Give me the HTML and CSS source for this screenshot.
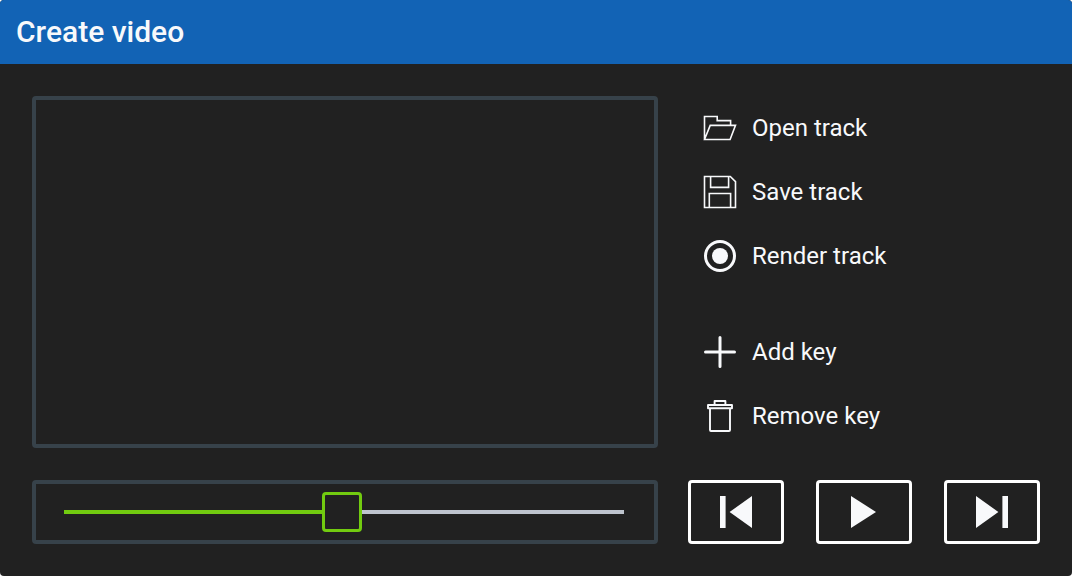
FILE: index.html
```html
<!DOCTYPE html>
<html lang="en">
<head>
<meta charset="utf-8">
<title>Create video</title>
<link rel="stylesheet" href="styles.css">
</head>
<body>
<main class="window">
  <header class="titlebar"><h1 class="title">Create video</h1></header>
  <div class="content">
    <section class="preview"></section>
    <nav class="menu">
      <button class="action"><svg class="icon" viewBox="0 0 32 32"><path stroke-width="1.6" d="M.5 27.5V4.5H13.2V8.6H26.6V13.4M.5 27.5 6.2 13.4H31.5L26.1 27.5Z"/></svg>Open track</button>
      <button class="action"><svg class="icon" viewBox="0 0 32 32"><path stroke-width="1.6" d="M.5.5H26.3L31.5 5.7V31.5H.5ZM6.6.5V11.4H24.6V.5M5.3 31.5V17.5H26.6V31.5"/></svg>Save track</button>
      <button class="action"><svg class="icon" viewBox="0 0 32 32"><circle cx="16" cy="16" r="14.5" stroke-width="3"/><circle class="solid" cx="16" cy="16" r="8"/></svg>Render track</button>
      <button class="action action-group"><svg class="icon" viewBox="0 0 32 32"><path stroke-width="3" stroke-linecap="round" d="M16 1.5V30.5M1.5 16H30.5"/></svg>Add key</button>
      <button class="action"><svg class="icon" viewBox="0 0 32 32"><path stroke-width="1.9" stroke-linejoin="round" d="M4 5H28V8.3H4ZM10.6 5V1H21.4V5M6 8.3V30Q6 31 7 31H25Q26 31 26 30V8.3"/></svg>Remove key</button>
    </nav>
    <section class="timeline">
      <div class="played"></div><div class="thumb"></div><div class="remaining"></div>
    </section>
    <div class="transport">
      <button class="control" aria-label="Previous"><svg class="icon" viewBox="0 0 32 32"><path class="solid" d="M0 0H5.6V32H0ZM32 0V32L9.6 16Z"/></svg></button>
      <button class="control" aria-label="Play"><svg class="icon" viewBox="0 0 32 32"><path class="solid" d="M3 0V32L28 16Z"/></svg></button>
      <button class="control" aria-label="Next"><svg class="icon" viewBox="0 0 32 32"><path class="solid" d="M0 0V32L22.4 16ZM26.4 0H32V32H26.4Z"/></svg></button>
    </div>
  </div>
</main>
</body>
</html>
```
FILE: styles.css
```css
* { box-sizing: border-box; }
body { margin: 0; background: #fff; font-family: Roboto, sans-serif; color: #f8f9fb; }
.window { width: 1072px; height: 576px; overflow: hidden; border-radius: 4px; background: #212121; }
.titlebar { display: flex; align-items: center; height: 64px; padding: 0 16px; background: #1263b5; }
.title { margin: 0; font-size: 30px; font-weight: 500; line-height: 36px; }
.content { display: grid; grid-template-columns: 626px 352px; grid-template-rows: 352px 64px; column-gap: 30px; row-gap: 32px; padding: 32px; }
.preview, .timeline { border: 4px solid #37424a; border-radius: 4px; }
.menu { display: flex; flex-direction: column; gap: 32px; padding: 16px; }
.action { display: flex; align-items: center; gap: 16px; height: 32px; padding: 0; border: 0; background: none; color: inherit; font: 400 24px/32px Roboto, sans-serif; white-space: nowrap; }
.action-group { margin-top: 32px; }
.icon { display: block; flex: none; width: 32px; height: 32px; overflow: visible; fill: none; stroke: #f8f9fb; }
.solid { fill: #f8f9fb; stroke: none; }
.timeline { display: flex; align-items: center; padding: 0 30px 0 28px; }
.played { width: 258px; height: 4px; background: #72cb10; }
.thumb { width: 40px; height: 40px; border: 3px solid #72cb10; border-radius: 4px; }
.remaining { flex: 1; height: 4px; background: #bec4ce; }
.transport { display: flex; gap: 32px; }
.control { display: flex; align-items: center; justify-content: center; width: 96px; height: 64px; padding: 0; border: 3px solid #fff; border-radius: 4px; background: none; }
```
